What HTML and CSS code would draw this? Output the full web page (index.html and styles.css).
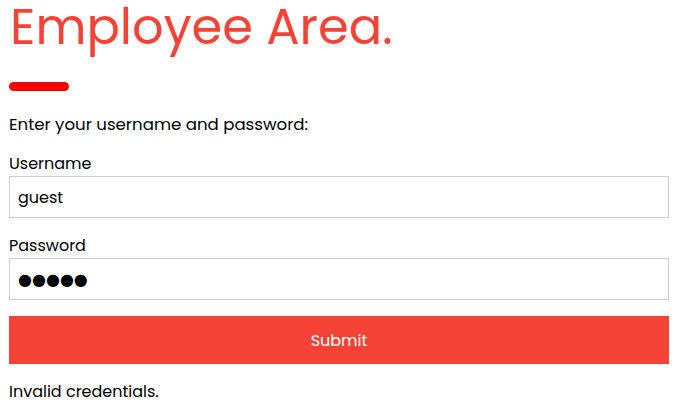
FILE: index.html
```html
<!DOCTYPE html>
<html>
<head>
<meta charset="utf-8">
<link rel="stylesheet" href="styles.css">
</head>
<body>
<div class="page">
  <h1 class="title">Employee Area.</h1>
  <div class="bar"></div>
  <p class="intro">Enter your username and password:</p>
  <form class="form">
    <label class="label">Username</label>
    <input class="field" type="text" value="guest">
    <label class="label">Password</label>
    <input class="field dots" type="text" value="●●●●●">
    <button class="submit" type="button">Submit</button>
  </form>
  <p class="msg">Invalid credentials.</p>
</div>
</body>
</html>
```
FILE: styles.css
```css
html, body { margin: 0; padding: 0; background: #fff; }
body { font-family: "Poppins", "Inter", "DejaVu Sans", sans-serif; color: #000; }
.page { padding: 0 7px 0 9px; display: flex; flex-direction: column; }
.title { margin: -8px 0 0; padding-left: 1px; font-size: 49.5px; font-weight: 400; color: #f44336; line-height: 70px; }
.bar { width: 60px; height: 9px; background: #ff0000; border-radius: 5px; margin-top: 20px; }
.intro { margin: 22px 0 0; font-size: 16.6px; line-height: 24px; font-weight: 400; }
.form { display: flex; flex-direction: column; margin-top: 15px; }
.label { font-size: 16px; line-height: 24px; }
.field { box-sizing: border-box; height: 42px; margin: 0 0 16px; border: 1px solid #ccc; padding: 0 8px; font: inherit; font-size: 16px; color: #000; background: #fff; outline: none; }
.dots { font-family: "DejaVu Sans", sans-serif; font-size: 16px; padding-left: 8px; }
.submit { height: 48px; border: 0; background: #f44336; color: #fff; font: inherit; font-size: 16px; margin-top: 0; }
.msg { margin: 16px 0 0; font-size: 16px; line-height: 24px; }
```
